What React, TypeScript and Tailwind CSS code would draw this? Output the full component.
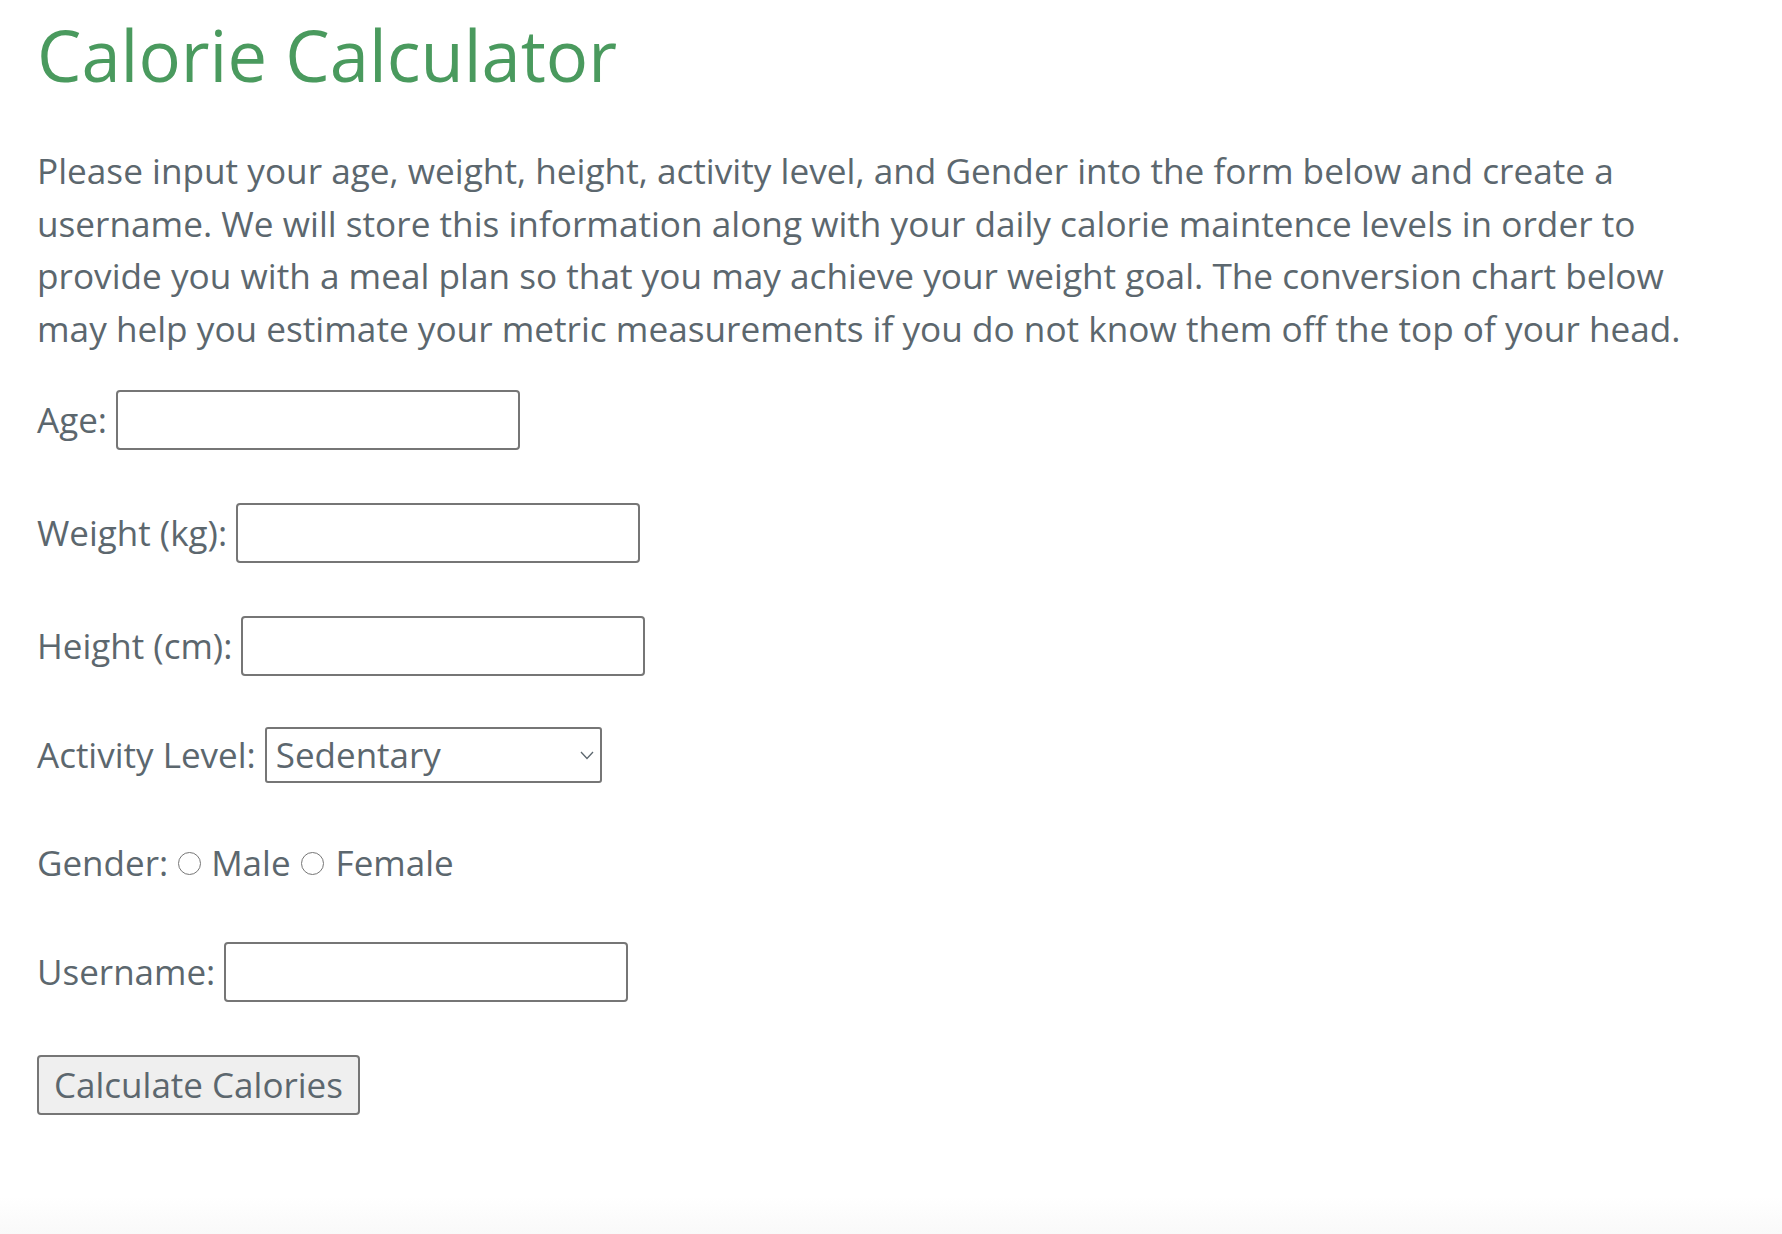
import React from "react";

function TextRow({ label }: { label: string }) {
  return (
    <div className="flex items-center gap-[9px]">
      <label className="text-[35px] leading-[46px] whitespace-nowrap">{label}</label>
      <input
        type="text"
        className="box-border h-[60px] w-[404px] rounded-[4px] border-2 border-[#767676] bg-white px-2 text-[30px] outline-none"
      />
    </div>
  );
}

export default function App() {
  return (
    <div className="min-h-[1234px] w-full bg-[linear-gradient(to_bottom,#ffffff_97%,#f9f9f9_100%)] px-[37px] font-['Open_Sans',sans-serif] text-[#5c676e]">
      <h1 className="m-0 pt-[12px] text-[70.5px] font-normal leading-[86px] text-[#4a9a5e]">
        Calorie Calculator
      </h1>
      <p className="m-0 mt-[46px] text-[35.2px] leading-[52.6px]">
        Please input your age, weight, height, activity level, and Gender into the form below and create a
        <br />
        username. We will store this information along with your daily calorie maintence levels in order to
        <br />
        provide you with a meal plan so that you may achieve your weight goal. The conversion chart below
        <br />
        may help you estimate your metric measurements if you do not know them off the top of your head.
      </p>
      <form className="mt-[36px] flex flex-col" onSubmit={(e) => e.preventDefault()}>
        <TextRow label="Age:" />
        <div className="mt-[53px]">
          <TextRow label="Weight (kg):" />
        </div>
        <div className="mt-[53px]">
          <TextRow label="Height (cm):" />
        </div>
        <div className="mt-[51px] flex items-center gap-[9px]">
          <label className="text-[35px] leading-[46px] whitespace-nowrap">Activity Level:</label>
          <div className="relative box-border flex h-[56px] w-[337px] items-center rounded-[3px] border-2 border-[#767676] bg-white pl-[9px]">
            <span className="text-[35px] leading-[46px]">Sedentary</span>
            <svg
              className="absolute right-[6px] top-[22px]"
              width="14"
              height="9"
              viewBox="0 0 14 9"
              fill="none"
            >
              <polyline points="1,1 7,7.5 13,1" stroke="#5c676e" strokeWidth="1.3" />
            </svg>
          </div>
        </div>
        <div className="mt-[57px] flex items-center text-[35px] leading-[46px]">
          <span>Gender:</span>
          <span className="ml-[10px] mr-[10px] box-border inline-block h-[23px] w-[23px] rounded-full border-[1.5px] border-[#767676] bg-white" />
          <span>Male</span>
          <span className="ml-[10px] mr-[12px] box-border inline-block h-[23px] w-[23px] rounded-full border-[1.5px] border-[#767676] bg-white" />
          <span>Female</span>
        </div>
        <div className="mt-[56px]">
          <TextRow label="Username:" />
        </div>
        <div className="mt-[53px]">
          <button
            type="submit"
            className="box-border h-[60px] rounded-[4px] border-2 border-[#767676] bg-[#efefef] px-[15px] text-[35px] leading-[46px] text-[#5c676e]"
          >
            Calculate Calories
          </button>
        </div>
      </form>
    </div>
  );
}
